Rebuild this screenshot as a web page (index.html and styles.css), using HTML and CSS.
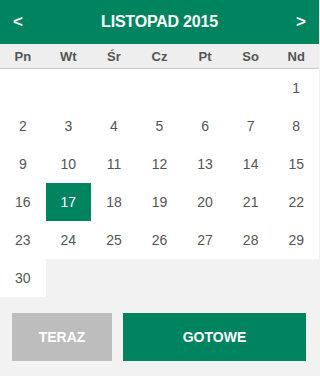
FILE: index.html
```html
<!DOCTYPE html>
<html lang="pl">
<head>
<meta charset="utf-8">
<title>Kalendarz</title>
<link rel="stylesheet" href="styles.css">
</head>
<body>
<div class="picker">
  <div class="head">
    <span class="nav">&lt;</span>
    <span class="title">LISTOPAD 2015</span>
    <span class="nav">&gt;</span>
  </div>
  <div class="weekdays">
    <span>Pn</span><span>Wt</span><span>Śr</span><span>Cz</span><span>Pt</span><span>So</span><span>Nd</span>
  </div>
  <div class="days">
    <span class="day blank"></span><span class="day blank"></span><span class="day blank"></span><span class="day blank"></span><span class="day blank"></span><span class="day blank"></span><span class="day">1</span>
    <span class="day">2</span><span class="day">3</span><span class="day">4</span><span class="day">5</span><span class="day">6</span><span class="day">7</span><span class="day">8</span>
    <span class="day">9</span><span class="day">10</span><span class="day">11</span><span class="day">12</span><span class="day">13</span><span class="day">14</span><span class="day">15</span>
    <span class="day">16</span><span class="day selected">17</span><span class="day">18</span><span class="day">19</span><span class="day">20</span><span class="day">21</span><span class="day">22</span>
    <span class="day">23</span><span class="day">24</span><span class="day">25</span><span class="day">26</span><span class="day">27</span><span class="day">28</span><span class="day">29</span>
    <span class="day">30</span>
  </div>
  <div class="actions">
    <button class="btn btn-now">TERAZ</button>
    <button class="btn btn-done">GOTOWE</button>
  </div>
</div>
</body>
</html>
```

FILE: styles.css
```css
html, body {
  margin: 0;
  padding: 0;
  background: #f2f2f2;
  font-family: "Liberation Sans", Arial, sans-serif;
}
.picker {
  width: 319px;
  height: 376px;
  background: #f2f2f2;
}
.head {
  height: 44px;
  background: #00845f;
  color: #fff;
  display: flex;
  align-items: center;
  justify-content: space-between;
  padding: 0 12px 0 12px;
  box-sizing: border-box;
  font-weight: bold;
}
.nav {
  font-size: 17px;
  width: 12px;
  text-align: center;
  line-height: 1;
  margin-top: -2px;
}
.title {
  font-size: 16px;
  letter-spacing: -0.2px;
  margin-top: -1px;
}
.weekdays {
  display: grid;
  grid-template-columns: repeat(7, 1fr);
  height: 24px;
  background: #eeeeee;
  border-bottom: 1px solid #c9c9c9;
  align-items: center;
  text-align: center;
  font-size: 13px;
  font-weight: bold;
  color: #555;
}
.days {
  display: grid;
  grid-template-columns: repeat(7, 1fr);
  grid-auto-rows: 38px;
}
.day {
  background: #fff;
  display: flex;
  align-items: center;
  justify-content: center;
  font-size: 14px;
  color: #555;
}
.day.selected {
  background: #00845f;
  color: #fff;
}
.actions {
  display: flex;
  gap: 11px;
  padding: 16px 13px 0 12px;
}
.btn {
  height: 48px;
  border: none;
  color: #fff;
  font-family: "Liberation Sans", Arial, sans-serif;
  font-size: 14px;
  font-weight: bold;
  padding: 0;
}
.btn-now {
  width: 100px;
  background: #bdbdbd;
}
.btn-done {
  flex: 1;
  background: #00845f;
}
```
